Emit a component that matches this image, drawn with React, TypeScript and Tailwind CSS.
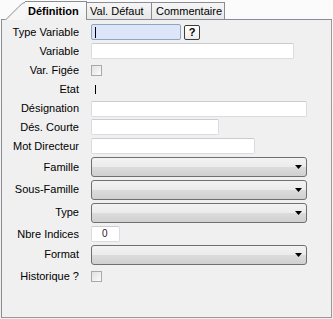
import cn from 'clsx';

const font = { fontFamily: '"Liberation Sans", Arial, sans-serif' };

type RowProps = {
    label: string;
    h: number;
    children?: React.ReactNode;
};

const heights: Record<number, string> = {
    18: 'h-[18px]',
    19: 'h-[19px]',
    20: 'h-[20px]',
    21: 'h-[21px]',
    22: 'h-[22px]',
    23: 'h-[23px]',
};

const Row = ({ label, h, children }: RowProps) => (
    <div className={cn('flex', 'flex-row', 'items-center', heights[h])}>
        <div className="w-[77px] shrink-0 text-right text-[11px] leading-none text-black">{label}</div>
        <div className="ml-[12px] flex flex-row items-center gap-[3px]">{children}</div>
    </div>
);

const TextBox = ({ w, children, focused }: { w: string; children?: React.ReactNode; focused?: boolean }) => (
    <div
        className={cn(
            'flex items-center h-[16px] rounded-[2px] border',
            w,
            focused ? 'border-[#8fa5c4] bg-[#dce6f8]' : 'border-[#d9dde3] border-t-[#c9ccd2] bg-white',
        )}
    >
        {children}
    </div>
);

const Combo = () => (
    <div className="flex h-[20px] w-[216px] flex-row items-center justify-end rounded-[3px] border border-[#707070] bg-[linear-gradient(#f3f3f3,#ebebeb_50%,#dcdcdc_50%,#d0d0d0)] pr-[4px]">
        <svg width="7" height="4" viewBox="0 0 7 4">
            <path d="M0 0 H7 L3.5 4 Z" fill="#000" />
        </svg>
    </div>
);

const Check = () => (
    <div className="h-[11px] w-[11px] border border-[#a9a9a9] bg-[linear-gradient(135deg,#e2e2e2,#fbfbfb)]" />
);

export default function App() {
    return (
        <div className="h-[319px] w-[333px] bg-[linear-gradient(#fbfbfb,#eeeeee)] select-none" style={font}>
            {/* TABS */}
            <div className="flex h-[19px] flex-row items-end pl-[5px] text-[11px] leading-none">
                <div className="relative z-10 mb-[-1px] flex h-[19px] flex-row">
                    <svg width="20" height="19" viewBox="0 0 20 19" className="shrink-0">
                        <path d="M0 19 L14 5 Q18 1 20 1 L20 19 Z" fill="#f6f6f6" />
                        <path d="M0.5 19 L14 5.5 Q17.5 1.5 20 1.5" fill="none" stroke="#898c95" />
                    </svg>
                    <div className="flex w-[62px] items-start justify-start border-t border-r border-[#898c95] bg-[linear-gradient(#fbfbfb,#f0f0f0)] pt-[4px] pl-[3px] font-bold">
                        Définition
                    </div>
                </div>
                <div className="flex h-[17px] w-[65px] items-start border-t border-r border-[#898c95] bg-[linear-gradient(#f6f6f6,#e8e8e8)] pt-[3px] pl-[3px]">
                    Val. Défaut
                </div>
                <div className="flex h-[17px] w-[73px] items-start border-t border-r border-[#898c95] bg-[linear-gradient(#f6f6f6,#e8e8e8)] pt-[3px] pl-[4px]">
                    Commentaire
                </div>
            </div>
            {/* PANEL */}
            <div className="ml-[1px] flex h-[299px] w-[331px] flex-col border border-[#898c95] border-r-[#9a9a9a] border-b-[#9a9a9a] bg-[#f0f0f0] pt-[2px]">
                <Row label="Type Variable" h={20}>
                    <TextBox w="w-[90px]" focused>
                        <span className="ml-[3px] h-[11px] w-[1px] bg-black" />
                    </TextBox>
                    <div className="flex h-[15px] w-[16px] items-center justify-center rounded-[2px] border border-[#3c3c3c] bg-[linear-gradient(#ffffff,#ececec)] text-[11px] font-bold leading-none">
                        ?
                    </div>
                </Row>
                <Row label="Variable" h={18}>
                    <TextBox w="w-[203px]" />
                </Row>
                <Row label="Var. Figée" h={20}>
                    <Check />
                </Row>
                <Row label="Etat" h={19}>
                    <span className="ml-[4px] h-[9px] w-[1px] bg-black" />
                </Row>
                <Row label="Désignation" h={19}>
                    <TextBox w="w-[216px]" />
                </Row>
                <Row label="Dés. Courte" h={18}>
                    <TextBox w="w-[128px]" />
                </Row>
                <Row label="Mot Directeur" h={20}>
                    <TextBox w="w-[164px]" />
                </Row>
                <Row label="Famille" h={22}>
                    <Combo />
                </Row>
                <Row label="Sous-Famille" h={23}>
                    <Combo />
                </Row>
                <Row label="Type" h={23}>
                    <Combo />
                </Row>
                <Row label="Nbre Indices" h={20}>
                    <TextBox w="w-[29px]">
                        <span className="ml-[10px] text-[10px] leading-none text-[#3a1030]">0</span>
                    </TextBox>
                </Row>
                <Row label="Format" h={21}>
                    <Combo />
                </Row>
                <Row label="Historique ?" h={22}>
                    <Check />
                </Row>
            </div>
        </div>
    );
}
